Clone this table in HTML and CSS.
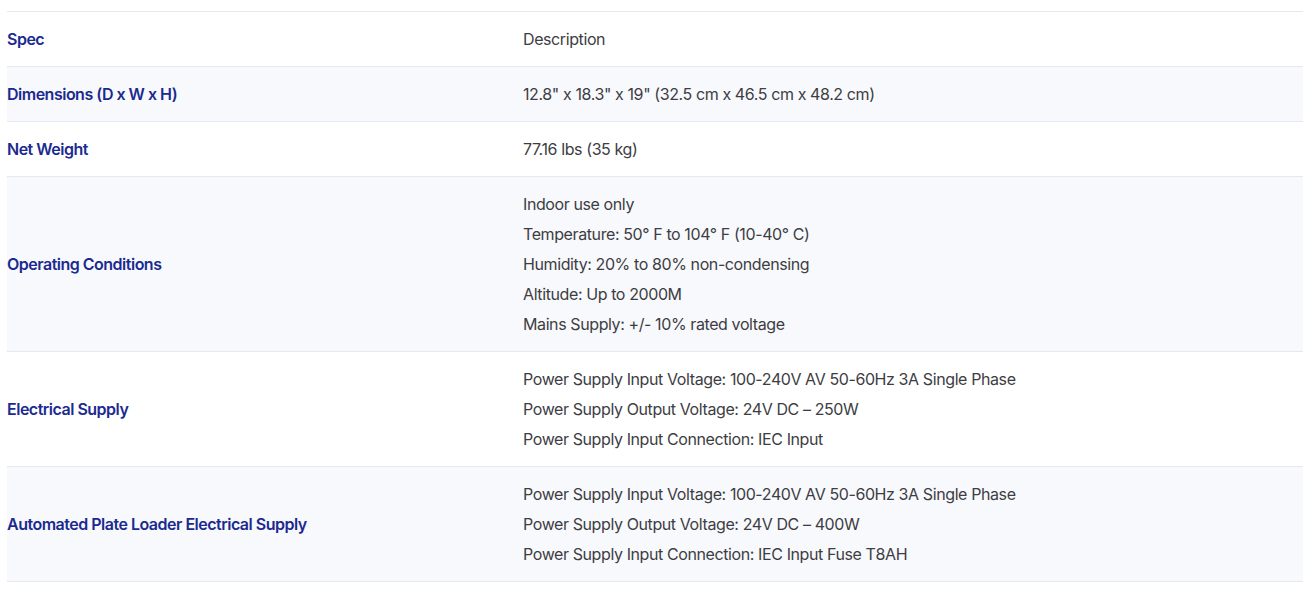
FILE: index.html
```html
<!DOCTYPE html>
<html>
<head>
<meta charset="utf-8">
<link rel="stylesheet" href="styles.css">
</head>
<body>
<div class="wrap">
  <div class="specs">
    <div class="row">
      <div class="spec">Spec</div>
      <div class="desc"><div>Description</div></div>
    </div>
    <div class="row alt">
      <div class="spec">Dimensions (D x W x H)</div>
      <div class="desc"><div>12.8" x 18.3" x 19" (32.5 cm x 46.5 cm x 48.2 cm)</div></div>
    </div>
    <div class="row">
      <div class="spec">Net Weight</div>
      <div class="desc"><div>77.16 lbs (35 kg)</div></div>
    </div>
    <div class="row alt">
      <div class="spec">Operating Conditions</div>
      <div class="desc">
        <div>Indoor use only</div>
        <div>Temperature: 50° F to 104° F (10-40° C)</div>
        <div>Humidity: 20% to 80% non-condensing</div>
        <div>Altitude: Up to 2000M</div>
        <div>Mains Supply: +/- 10% rated voltage</div>
      </div>
    </div>
    <div class="row">
      <div class="spec">Electrical Supply</div>
      <div class="desc">
        <div>Power Supply Input Voltage: 100-240V AV 50-60Hz 3A Single Phase</div>
        <div>Power Supply Output Voltage: 24V DC – 250W</div>
        <div>Power Supply Input Connection: IEC Input</div>
      </div>
    </div>
    <div class="row alt">
      <div class="spec">Automated Plate Loader Electrical Supply</div>
      <div class="desc">
        <div>Power Supply Input Voltage: 100-240V AV 50-60Hz 3A Single Phase</div>
        <div>Power Supply Output Voltage: 24V DC – 400W</div>
        <div>Power Supply Input Connection: IEC Input Fuse T8AH</div>
      </div>
    </div>
  </div>
</div>
</body>
</html>
```

FILE: styles.css
```css
html, body {
  margin: 0;
  padding: 0;
  background: #ffffff;
}
.wrap {
  padding: 11px 3px 0 7px;
}
.specs {
  display: flex;
  flex-direction: column;
  border-bottom: 1px solid #e6e7f1;
}
.row {
  display: grid;
  grid-template-columns: 516px 1fr;
  border-top: 1px solid #e6e7f1;
  padding: 12px 0;
  background: #ffffff;
}
.row.alt {
  background: #f8f9fd;
}
.spec {
  display: flex;
  align-items: center;
  font-family: Inter, "Open Sans", sans-serif;
  font-weight: 600;
  font-size: 16px;
  line-height: 30px;
  color: #1b2a8f;
  letter-spacing: -0.5px;
}
.desc {
  font-family: Inter, "Open Sans", sans-serif;
  font-weight: 400;
  font-size: 16px;
  line-height: 30px;
  color: #3d3d42;
  letter-spacing: -0.4px;
}
```
